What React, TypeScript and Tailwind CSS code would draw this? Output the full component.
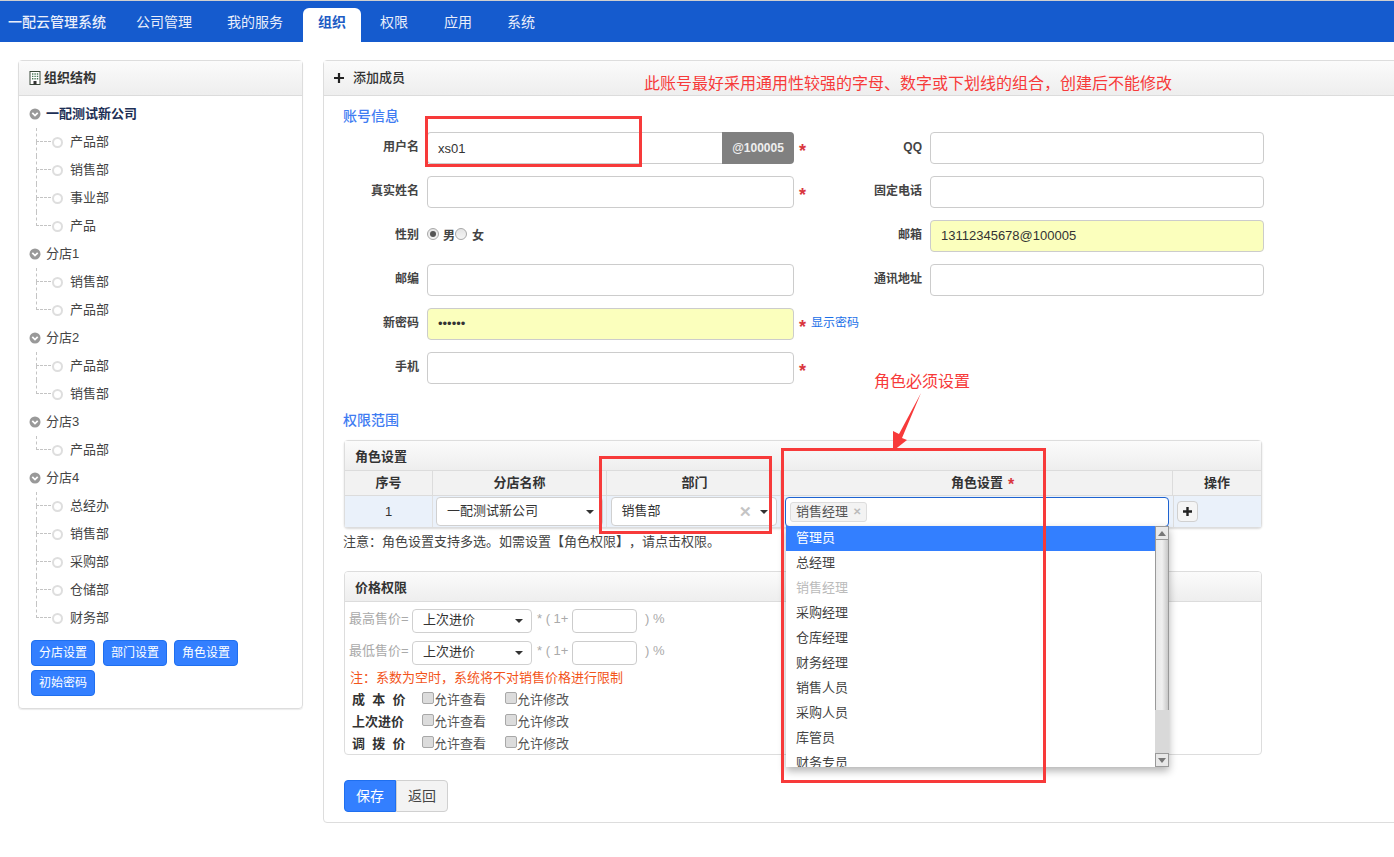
import React from "react";

const F = "font-['Liberation_Sans','Noto_Sans_CJK_SC',sans-serif] [text-spacing-trim:space-all]";

type TreeGroup = { name: string; bold?: boolean; kids: string[] };
const tree: TreeGroup[] = [
  { name: "一配测试新公司", bold: true, kids: ["产品部", "销售部", "事业部", "产品"] },
  { name: "分店1", kids: ["销售部", "产品部"] },
  { name: "分店2", kids: ["产品部", "销售部"] },
  { name: "分店3", kids: ["产品部"] },
  { name: "分店4", kids: ["总经办", "销售部", "采购部", "仓储部", "财务部"] },
];

function PanelHead({ children, className = "" }: { children: React.ReactNode; className?: string }) {
  return (
    <div className={`flex items-center bg-gradient-to-b from-[#fbfbfb] to-[#eeeeee] border-b border-[#dcdcdc] text-[13px] font-bold text-[#333] ${className}`}>
      {children}
    </div>
  );
}

function Chevron() {
  return (
    <svg width="12" height="12" viewBox="0 0 12 12" className="shrink-0">
      <circle cx="6" cy="6" r="5.5" fill="#999" />
      <path d="M3.3 4.8 6 7.6 8.7 4.8" fill="none" stroke="#fff" strokeWidth="1.7" />
    </svg>
  );
}

function Caret() {
  return <span className="w-0 h-0 border-x-[4px] border-x-transparent border-t-[4px] border-t-[#333] shrink-0" />;
}

function TreeView() {
  return (
    <div className="pt-[4px] pl-[10px]">
      {tree.map((g) => (
        <div key={g.name}>
          <div className={`h-[28px] flex items-center text-[13px] ${g.bold ? "font-bold text-[#1d2f55]" : "text-[#444]"}`}>
            <Chevron />
            <span className="ml-[5px]">{g.name}</span>
          </div>
          {g.kids.map((k, i) => (
            <div key={k + i} className="relative h-[28px] flex items-center pl-[23px] text-[13px] text-[#444]">
              <span className="absolute left-[7px] top-0 w-[15px] border-l border-b border-dashed border-[#c4c4c4] h-[14px]" />
              {i < g.kids.length - 1 && (
                <span className="absolute left-[7px] top-[14px] h-[14px] border-l border-dashed border-[#c4c4c4]" />
              )}
              <span className="w-[11px] h-[11px] rounded-full border-2 border-[#dedede] bg-white" />
              <span className="ml-[7px]">{k}</span>
            </div>
          ))}
        </div>
      ))}
    </div>
  );
}

function BlueBtn({ children, className = "" }: { children: React.ReactNode; className?: string }) {
  return (
    <button className={`h-[26px] w-[64px] rounded-[4px] bg-[#337fff] border border-[#1f6fef] text-white text-[12px] ${className}`}>
      {children}
    </button>
  );
}

function Req() {
  return <span className="text-[#d9363e] text-[18px] font-bold leading-none pt-[5px] ml-[5px] shrink-0">*</span>;
}

function Label({ children, w }: { children: React.ReactNode; w: string }) {
  return <div className={`${w} text-right text-[12px] font-bold text-[#444] pr-[8px] shrink-0 -mt-[3px]`}>{children}</div>;
}

function Input({ w, value, yellow }: { w: string; value?: string; yellow?: boolean }) {
  return (
    <div className={`${w} shrink-0 h-[32px] border border-[#cccccc] rounded-[4px] flex items-center px-[10px] text-[13px] text-[#333] ${yellow ? "bg-[#fbffbd]" : "bg-white"}`}>
      {value}
    </div>
  );
}

function Row({ children }: { children: React.ReactNode }) {
  return <div className="h-[44px] flex items-start">{children}</div>;
}

function LeftCell({ children }: { children: React.ReactNode }) {
  return <div className="w-[511px] flex items-center shrink-0 h-[32px]">{children}</div>;
}

function RightCell({ children }: { children: React.ReactNode }) {
  return <div className="flex items-center h-[32px]">{children}</div>;
}

function Radio({ on }: { on?: boolean }) {
  return (
    <span className="w-[12px] h-[12px] rounded-full border border-[#a8a8a8] bg-gradient-to-b from-[#e4e4e4] to-[#f5f5f5] flex items-center justify-center">
      {on && <span className="w-[6px] h-[6px] rounded-full bg-[#555]" />}
    </span>
  );
}

function Check({ label }: { label: string }) {
  return (
    <span className="flex items-center w-[83px]">
      <span className="w-[12px] h-[12px] rounded-[2px] border border-[#a8a8a8] bg-[#dcdcdc] -mt-[4px] shrink-0" />
      <span className="text-[13px] text-[#555]">{label}</span>
    </span>
  );
}

function SelectBox({ text, w, clear, className = "" }: { text: string; w: string; clear?: boolean; className?: string }) {
  return (
    <div className={`${w} bg-white border border-[#d0d0d0] rounded-[4px] flex items-center pl-[10px] pr-[8px] text-[13px] text-[#333] ${className}`}>
      <span className="flex-1 pb-[2px]">{text}</span>
      {clear && <span className="text-[#c4c4c4] font-bold text-[15px] mr-[8px] leading-none">✕</span>}
      <Caret />
    </div>
  );
}

function PriceRow({ label }: { label: string }) {
  return (
    <div className="h-[32px] flex items-center text-[13px] text-[#aaa]">
      <span className="w-[63px] shrink-0 -mt-[5px]">{label}</span>
      <SelectBox text="上次进价" w="w-[120px]" className="h-[24px]" />
      <span className="ml-[5px] w-[35px] -mt-[5px]">* ( 1+</span>
      <div className="w-[65px] h-[24px] bg-white border border-[#cccccc] rounded-[4px]" />
      <span className="ml-[8px] -mt-[5px]">) %</span>
    </div>
  );
}

function PermRow({ label }: { label: React.ReactNode }) {
  return (
    <div className="h-[22px] flex items-center text-[13px]">
      <div className="w-[70px] font-bold text-[#333] whitespace-pre">{label}</div>
      <Check label="允许查看" />
      <Check label="允许修改" />
    </div>
  );
}

const roles = ["管理员", "总经理", "销售经理", "采购经理", "仓库经理", "财务经理", "销售人员", "采购人员", "库管员", "财务专员"];

function Dropdown() {
  return (
    <div className="absolute left-[5px] top-[30px] w-[383px] h-[241px] bg-white overflow-hidden flex shadow-[0_4px_8px_rgba(0,0,0,0.3)] z-10">
      <div className="flex-1 min-w-0">
        {roles.map((r, i) => (
          <div
            key={r}
            className={`h-[25px] leading-[24px] pl-[10px] text-[13px] ${i === 0 ? "bg-[#337fff] text-white" : i === 2 ? "text-[#bbb]" : "text-[#444]"}`}
          >
            {r}
          </div>
        ))}
      </div>
      <div className="w-[14px] shrink-0 flex flex-col bg-[#d9d9d9]">
        <div className="h-[14px] bg-[#e8e8e8] border border-[#999] flex items-center justify-center">
          <span className="w-0 h-0 border-x-[4px] border-x-transparent border-b-[5px] border-b-[#777]" />
        </div>
        <div className="h-[170px] border-x border-[#999] bg-gradient-to-r from-[#e8e8e8] via-[#f0f0f0] to-[#c8c8c8]" />
        <div className="flex-1" />
        <div className="h-[14px] bg-[#e8e8e8] border border-[#999] flex items-center justify-center">
          <span className="w-0 h-0 border-x-[4px] border-x-transparent border-t-[5px] border-t-[#777]" />
        </div>
      </div>
    </div>
  );
}

function RoleTable() {
  const th = "flex items-center justify-center text-[13px] font-bold text-[#333] border-r border-[#dcdcdc]";
  const td = "flex items-center justify-center border-r border-[#e0e0e0] py-[1px]";
  return (
    <div className="w-[918px] ml-[1px] border border-[#dddddd] rounded-[4px] shadow-[0_1px_2px_rgba(0,0,0,0.15)] bg-white">
      <PanelHead className="h-[30px] pl-[10px] pt-[2px] !border-[#dcdcdc]">角色设置</PanelHead>
      <div className="grid grid-cols-[88px_174px_174px_392px_88px] h-[25px] bg-[#f2f2f2] border-b border-[#dcdcdc]">
        <div className={th}>序号</div>
        <div className={th}>分店名称</div>
        <div className={`${th} pl-[2px]`}>部门</div>
        <div className={`${th} pl-[12px]`}>
          角色设置<span className="text-[#d9363e] text-[16px] ml-[5px] leading-none pt-[3px]">*</span>
        </div>
        <div className={`${th} border-r-0`}>操作</div>
      </div>
      <div className="grid grid-cols-[88px_174px_174px_392px_88px] h-[31px] bg-[#eaf1fa]">
        <div className={`${td} text-[13px] text-[#333]`}>1</div>
        <div className={td}>
          <SelectBox text="一配测试新公司" w="w-[167px]" className="h-[29px]" />
        </div>
        <div className={td}>
          <SelectBox text="销售部" w="w-[166px]" clear className="h-[29px]" />
        </div>
        <div className="relative flex items-center pl-[4px]">
          <div className="w-[384px] h-[30px] bg-white border border-[#1e63d0] rounded-[4px] flex items-center pl-[4px]">
            <span className="h-[20px] px-[5px] flex items-center bg-[#f3f3f3] border border-[#dddddd] rounded-[3px] text-[13px] text-[#555]">
              销售经理<span className="ml-[5px] text-[#bbb] font-bold text-[10px]">✕</span>
            </span>
          </div>
          <Dropdown />
        </div>
        <div className="flex items-center pl-[3px] border-l border-[#dcdcdc]">
          <span className="w-[21px] h-[21px] rounded-[4px] bg-[#f5f5f5] border border-[#d0d0d0] flex items-center justify-center">
            <svg width="11" height="11" viewBox="0 0 11 11"><path d="M5.5 1v9M1 5.5h9" stroke="#222" strokeWidth="2.4" /></svg>
          </span>
        </div>
      </div>
    </div>
  );
}

function PricePanel() {
  return (
    <div className="w-[918px] ml-[1px] mt-[16px] h-[184px] border border-[#dddddd] rounded-[4px] bg-white overflow-hidden">
      <PanelHead className="h-[30px] pl-[10px] pt-[2px]">价格权限</PanelHead>
      <div className="pl-[4px] pt-[3px]">
        <PriceRow label="最高售价=" />
        <PriceRow label="最低售价=" />
        <div className="h-[20px] -mt-[1px] mb-[1px] flex items-center text-[13px] text-[#f3541a] pl-[1px]">注：系数为空时，系统将不对销售价格进行限制</div>
        <div className="pl-[3px]">
          <PermRow label="成  本  价" />
          <PermRow label="上次进价" />
          <PermRow label="调  拨  价" />
        </div>
      </div>
    </div>
  );
}

function Annotations() {
  return (
    <>
      <div className="absolute left-[425px] top-[116px] w-[217px] h-[51px] border-[3px] border-[#f73a3a] pointer-events-none z-20" />
      <div className="absolute left-[599px] top-[456px] w-[173px] h-[78px] border-[3px] border-[#f73a3a] pointer-events-none z-20" />
      <div className="absolute left-[781px] top-[448px] w-[265px] h-[335px] border-[3px] border-[#f73a3a] pointer-events-none z-20" />
      <div className="absolute left-[644px] top-[73px] text-[16px] leading-[22px] text-[#f73a3a] whitespace-nowrap z-20">
        此账号最好采用通用性较强的字母、数字或下划线的组合，创建后不能修改
      </div>
      <div className="absolute left-[874px] top-[371px] text-[16px] leading-[22px] text-[#f73a3a] whitespace-nowrap z-20">角色必须设置</div>
      <svg className="absolute left-[885px] top-[392px] z-20" width="40" height="60" viewBox="0 0 40 60">
        <path d="M36 1 L14 42 L8 39 L8 59 L22 48 L17 46 Z" fill="#f73a3a" />
      </svg>
    </>
  );
}

export default function App() {
  return (
    <div className={`relative w-[1394px] h-[857px] overflow-hidden bg-white ${F}`}>
      <nav className="h-[42px] border-t border-[#cfcfcf] bg-[#155bce] flex items-end pl-[8px] text-[14px] text-[#e9eefb]">
        <div className="h-[34px] pb-[6px] flex items-center w-[113px] shrink-0 font-medium">一配云管理系统</div>
        <div className="h-[34px] pb-[6px] flex items-center px-[15px]">公司管理</div>
        <div className="h-[34px] pb-[6px] flex items-center px-[15px] ml-[5px]">我的服务</div>
        <div className="h-[34px] pb-[6px] flex items-center px-[15px] ml-[5px] bg-white text-[#1d5bc4] font-bold rounded-t-[6px]">组织</div>
        <div className="h-[34px] pb-[6px] flex items-center px-[15px] ml-[4px]">权限</div>
        <div className="h-[34px] pb-[6px] flex items-center px-[15px] ml-[6px]">应用</div>
        <div className="h-[34px] pb-[6px] flex items-center px-[15px] ml-[5px]">系统</div>
      </nav>
      <main className="flex items-start pl-[18px] pt-[18px]">
        <aside className="w-[285px] h-[649px] shrink-0 border border-[#dddddd] rounded-[4px] shadow-[0_1px_1px_rgba(0,0,0,0.08)]">
          <PanelHead className="h-[35px] pl-[10px] text-[#2b3a55]">
            <svg width="12" height="14" viewBox="0 0 12 14" className="mr-[3px]">
              <rect x="1" y="0.5" width="10" height="13" fill="#fff" stroke="#3a4a3a" />
              <path d="M3 3h1.4M5.4 3h1.4M7.8 3h1.4M3 5.4h1.4M5.4 5.4h1.4M7.8 5.4h1.4M3 7.8h1.4M5.4 7.8h1.4M7.8 7.8h1.4" stroke="#4d7a5a" strokeWidth="1.4" />
              <rect x="4.5" y="10" width="3" height="3.5" fill="#333" />
            </svg>
            组织结构
          </PanelHead>
          <TreeView />
          <div className="flex flex-wrap gap-x-[8px] gap-y-[4px] pl-[12px] pt-[8px] w-[240px]">
            <BlueBtn>分店设置</BlueBtn>
            <BlueBtn>部门设置</BlueBtn>
            <BlueBtn className="-ml-[1px]">角色设置</BlueBtn>
            <BlueBtn>初始密码</BlueBtn>
          </div>
        </aside>
        <section className="ml-[20px] w-[1090px] h-[763px] shrink-0 border border-[#dddddd] rounded-[4px]">
          <PanelHead className="h-[35px] pl-[10px] font-normal">
            <svg width="10" height="10" viewBox="0 0 10 10" className="mr-[9px]"><path d="M5 0v10M0 5h10" stroke="#222" strokeWidth="2.2" /></svg>
            <span className="font-medium">添加成员</span>
          </PanelHead>
          <div className="pl-[19px]">
            <div className="h-[36px] pt-[4px] flex items-center text-[14px] font-medium text-[#3f7cf2]">账号信息</div>
            <Row>
              <LeftCell>
                <Label w="w-[84px]">用户名</Label>
                <div className="w-[367px] h-[32px] flex shrink-0">
                  <div className="flex-1 border border-r-0 border-[#cccccc] rounded-l-[4px] flex items-center px-[10px] pt-[1px] text-[13px] text-[#333]">xs01</div>
                  <div className="w-[72px] bg-[#808080] rounded-r-[4px] text-[#eee] font-bold text-[12px] flex items-center justify-center">@100005</div>
                </div>
                <Req />
              </LeftCell>
              <RightCell>
                <Label w="w-[76px]">QQ</Label>
                <Input w="w-[334px]" />
              </RightCell>
            </Row>
            <Row>
              <LeftCell>
                <Label w="w-[84px]">真实姓名</Label>
                <Input w="w-[367px]" />
                <Req />
              </LeftCell>
              <RightCell>
                <Label w="w-[76px]">固定电话</Label>
                <Input w="w-[334px]" />
              </RightCell>
            </Row>
            <Row>
              <LeftCell>
                <Label w="w-[84px]">性别</Label>
                <span className="-mt-[5px]"><Radio on /></span>
                <span className="text-[12px] font-bold text-[#444] ml-[4px] -mt-[1px]">男</span>
                <span className="-mt-[5px]"><Radio /></span>
                <span className="text-[12px] font-bold text-[#444] ml-[5px] -mt-[1px]">女</span>
              </LeftCell>
              <RightCell>
                <Label w="w-[76px]">邮箱</Label>
                <Input w="w-[334px]" yellow value="13112345678@100005" />
              </RightCell>
            </Row>
            <Row>
              <LeftCell>
                <Label w="w-[84px]">邮编</Label>
                <Input w="w-[367px]" />
              </LeftCell>
              <RightCell>
                <Label w="w-[76px]">通讯地址</Label>
                <Input w="w-[334px]" />
              </RightCell>
            </Row>
            <Row>
              <LeftCell>
                <Label w="w-[84px]">新密码</Label>
                <Input w="w-[367px]" yellow value="••••••" />
                <Req />
                <span className="text-[12px] text-[#1a6fe8] ml-[5px] -mt-[3px] whitespace-nowrap">显示密码</span>
              </LeftCell>
            </Row>
            <Row>
              <LeftCell>
                <Label w="w-[84px]">手机</Label>
                <Input w="w-[367px]" />
                <Req />
              </LeftCell>
            </Row>
            <div className="h-[44px] pt-[4px] flex items-center text-[14px] font-medium text-[#3f7cf2]">权限范围</div>
            <RoleTable />
            <div className="h-[27px] flex items-center text-[13px] text-[#444]">注意：角色设置支持多选。如需设置【角色权限】，请点击权限。</div>
            <PricePanel />
            <div className="flex mt-[25px] ml-[1px]">
              <button className="w-[52px] h-[32px] bg-[#337fff] border border-[#1f6fef] rounded-l-[4px] text-white text-[14px]">保存</button>
              <button className="w-[52px] h-[32px] bg-[#f3f3f3] border border-[#d0d0d0] rounded-r-[4px] text-[#444] text-[14px]">返回</button>
            </div>
          </div>
        </section>
      </main>
      <Annotations />
    </div>
  );
}
